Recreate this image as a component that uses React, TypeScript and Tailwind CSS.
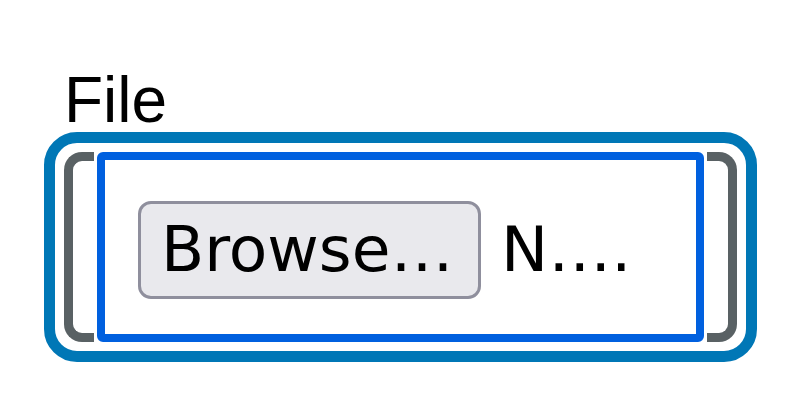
export default function App() {
  return (
    <div className="w-[800px] h-[408px] bg-white pt-[68px] pl-[44px]">
      {/* Label */}
      <div
        className="pl-[20px] text-[64px] leading-none text-black"
        style={{ fontFamily: '"Liberation Sans", Arial, sans-serif' }}
      >
        File
      </div>

      {/* Focus ring */}
      <div className="w-[713px] rounded-[33px] border-[11px] border-[#0077b6] px-[9px] py-[9px]">
        <div className="flex h-[190px] gap-[3px]">
          {/* Left bracket */}
          <div className="w-[30px] rounded-l-[18px] border-y-[9px] border-l-[9px] border-[#596164]" />

          {/* Inner box */}
          <div
            className="flex flex-1 items-start rounded-[6px] border-[8px] border-[#0060df] bg-white pt-[41px] pl-[33px]"
            style={{ fontFamily: '"DejaVu Sans", Verdana, sans-serif' }}
          >
            <div className="w-[343px] rounded-[13px] border-[3px] border-[#8f8f9d] bg-[#e9e9ed] py-[10px] pl-[20px] text-[63px] leading-[72px] text-black whitespace-nowrap">
              Browse…
            </div>
            <div className="pl-[20px] pt-[13px] text-[63px] leading-[72px] text-black whitespace-nowrap">
              N….
            </div>
          </div>

          {/* Right bracket */}
          <div className="w-[30px] rounded-r-[18px] border-y-[9px] border-r-[9px] border-[#596164]" />
        </div>
      </div>
    </div>
  )
}
